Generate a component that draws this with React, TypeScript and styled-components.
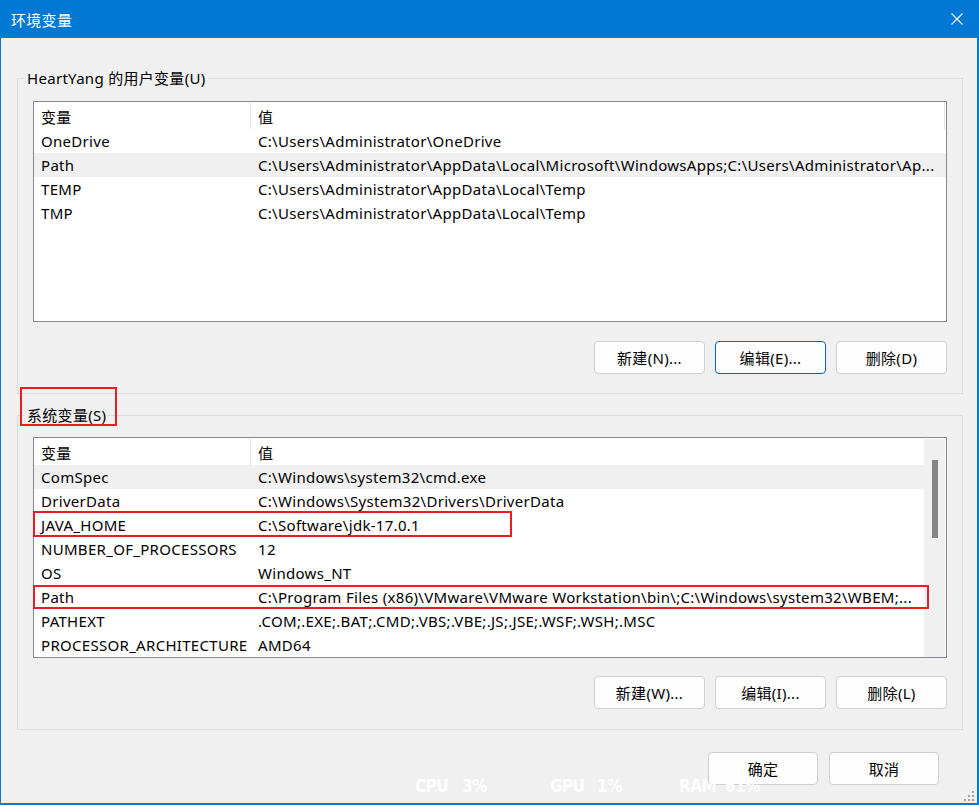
import styled, { createGlobalStyle } from "styled-components";

const GlobalStyle = createGlobalStyle`
  html, body {
    margin: 0;
    padding: 0;
    background: #ffffff;
  }
  * {
    box-sizing: border-box;
  }
`;

const UI_FONT = `"Noto Sans", "Noto Sans CJK SC", sans-serif`;

const Window = styled.div`
  position: relative;
  width: 979px;
  height: 805px;
  display: flex;
  flex-direction: column;
  background: #f0f0f0;
  border-left: 1px solid #0078d4;
  border-right: 2px solid #0078d4;
  border-bottom: 2px solid #0078d4;
  font-family: ${UI_FONT};
  font-size: 15px;
  letter-spacing: 0.3px;
  color: #000;
  overflow: hidden;
`;

const TitleBar = styled.div`
  height: 38px;
  flex-shrink: 0;
  display: flex;
  align-items: center;
  justify-content: space-between;
  padding: 0 14px 0 10px;
  background: #0078d4;
  color: #fff;
  font-size: 15px;
`;

const Body = styled.div`
  flex: 1;
  display: flex;
  flex-direction: column;
  padding: 40px 14px 0 16px;
`;

const Group = styled.div<{ $gap?: number; $bottom: number }>`
  position: relative;
  display: flex;
  flex-direction: column;
  border: 1px solid #dcdcdc;
  padding: 0 15px ${(p) => p.$bottom}px 15px;
  margin-top: ${(p) => p.$gap ?? 0}px;
`;

const Legend = styled.div<{ $after: number }>`
  align-self: flex-start;
  height: 20px;
  line-height: 20px;
  margin: -11px 0 ${(p) => p.$after}px -8px;
  padding: 0 2px;
  background: #f0f0f0;
  white-space: nowrap;
`;

const ListBox = styled.div`
  height: 221px;
  display: flex;
  border: 1px solid #828790;
  background: #fff;
`;

const Table = styled.div`
  flex: 1;
  min-width: 0;
  display: flex;
  flex-direction: column;
`;

const HeaderRow = styled.div<{ $tail?: boolean }>`
  height: 27px;
  display: flex;
  align-items: center;
  padding-top: 1px;
  border-right: ${(p) => (p.$tail ? "1px solid #e5e5e5" : "none")};
  margin-right: ${(p) => (p.$tail ? "1px" : "0")};
`;

const Row = styled.div<{ $selected?: boolean }>`
  position: relative;
  height: 24px;
  display: flex;
  align-items: center;
  background: ${(p) => (p.$selected ? "#f0f0f0" : "transparent")};
`;

const NameCell = styled.div<{ $head?: boolean }>`
  width: 217px;
  height: 100%;
  flex-shrink: 0;
  display: flex;
  align-items: center;
  padding-left: 7px;
  white-space: nowrap;
  overflow: hidden;
  border-right: ${(p) => (p.$head ? "1px solid #e5e5e5" : "none")};
`;

const ValueCell = styled.div`
  flex: 1;
  min-width: 0;
  padding-left: 7px;
  white-space: nowrap;
  overflow: hidden;
`;

const Marker = styled.div<{ $width: number; $top: number; $height: number }>`
  position: absolute;
  left: -1px;
  top: ${(p) => p.$top}px;
  width: ${(p) => p.$width}px;
  height: ${(p) => p.$height}px;
  border: 2px solid #ed1c24;
  pointer-events: none;
`;

const LabelMarker = styled.div`
  position: absolute;
  left: 2px;
  top: -29px;
  width: 97px;
  height: 39px;
  border: 2px solid #ed1c24;
  pointer-events: none;
`;

const ScrollTrack = styled.div`
  width: 21px;
  flex-shrink: 0;
  margin: 1px 1px 0 0;
  background: #f0f0f0;
  display: flex;
  justify-content: center;
  padding-top: 21px;
`;

const ScrollThumb = styled.div`
  width: 6px;
  height: 78px;
  background: #858585;
`;

const ButtonRow = styled.div<{ $top: number }>`
  display: flex;
  justify-content: flex-end;
  gap: 10px;
  margin-top: ${(p) => p.$top}px;
`;

const Button = styled.button<{ $primary?: boolean; $w?: number }>`
  width: ${(p) => p.$w ?? 111}px;
  height: 33px;
  padding: 0;
  border: 1px solid ${(p) => (p.$primary ? "#0067c0" : "#d0d0d0")};
  border-radius: 4px;
  background: #fdfdfd;
  font-family: ${UI_FONT};
  font-size: 15px;
  letter-spacing: 0.3px;
  color: #000;
`;

const Footer = styled.div`
  display: flex;
  justify-content: flex-end;
  gap: 11px;
  margin-top: 22px;
  padding-right: 24px;
`;

const Stats = styled.div`
  position: absolute;
  left: 414px;
  bottom: 8px;
  display: flex;
  font-family: "DejaVu Sans Condensed", "DejaVu Sans", sans-serif;
  font-weight: bold;
  font-size: 17px;
  line-height: 17px;
  color: rgba(255, 255, 255, 0.92);
  letter-spacing: -0.6px;
`;

const StatItem = styled.span<{ $w: number }>`
  flex-shrink: 0;
  width: ${(p) => p.$w}px;
`;

const Grip = styled.svg`
  position: absolute;
  right: 2px;
  bottom: 1px;
`;

type Item = { name: string; value: string; selected?: boolean };

const userVars: Item[] = [
  { name: "OneDrive", value: "C:\\Users\\Administrator\\OneDrive" },
  {
    name: "Path",
    value:
      "C:\\Users\\Administrator\\AppData\\Local\\Microsoft\\WindowsApps;C:\\Users\\Administrator\\Ap...",
    selected: true,
  },
  { name: "TEMP", value: "C:\\Users\\Administrator\\AppData\\Local\\Temp" },
  { name: "TMP", value: "C:\\Users\\Administrator\\AppData\\Local\\Temp" },
];

const sysVars: Item[] = [
  { name: "ComSpec", value: "C:\\Windows\\system32\\cmd.exe", selected: true },
  { name: "DriverData", value: "C:\\Windows\\System32\\Drivers\\DriverData" },
  { name: "JAVA_HOME", value: "C:\\Software\\jdk-17.0.1" },
  { name: "NUMBER_OF_PROCESSORS", value: "12" },
  { name: "OS", value: "Windows_NT" },
  {
    name: "Path",
    value:
      "C:\\Program Files (x86)\\VMware\\VMware Workstation\\bin\\;C:\\Windows\\system32\\WBEM;...",
  },
  { name: "PATHEXT", value: ".COM;.EXE;.BAT;.CMD;.VBS;.VBE;.JS;.JSE;.WSF;.WSH;.MSC" },
  { name: "PROCESSOR_ARCHITECTURE", value: "AMD64" },
];

const CloseIcon = () => (
  <svg width="12" height="12" viewBox="0 0 12 12">
    <path d="M0.5 0.5 L11.5 11.5 M11.5 0.5 L0.5 11.5" stroke="#fff" strokeWidth="1.1" />
  </svg>
);

const App = () => {
  return (
    <>
      <GlobalStyle />
      <Window>
        <TitleBar>
          <span>环境变量</span>
          <CloseIcon />
        </TitleBar>
        <Body>
          <Group $bottom={19}>
            <Legend $after={13}>HeartYang 的用户变量(U)</Legend>
            <ListBox>
              <Table>
                <HeaderRow $tail>
                  <NameCell $head>变量</NameCell>
                  <ValueCell>值</ValueCell>
                </HeaderRow>
                {userVars.map((v) => (
                  <Row key={v.name} $selected={v.selected}>
                    <NameCell>{v.name}</NameCell>
                    <ValueCell>{v.value}</ValueCell>
                  </Row>
                ))}
              </Table>
            </ListBox>
            <ButtonRow $top={19}>
              <Button>新建(N)...</Button>
              <Button $primary>编辑(E)...</Button>
              <Button>删除(D)</Button>
            </ButtonRow>
          </Group>

          <Group $gap={21} $bottom={20}>
            <LabelMarker />
            <Legend $after={12}>系统变量(S)</Legend>
            <ListBox>
              <Table>
                <HeaderRow>
                  <NameCell $head>变量</NameCell>
                  <ValueCell>值</ValueCell>
                </HeaderRow>
                {sysVars.map((v) => (
                  <Row key={v.name} $selected={v.selected}>
                    <NameCell>{v.name}</NameCell>
                    <ValueCell>{v.value}</ValueCell>
                    {v.name === "JAVA_HOME" && <Marker $width={479} $top={-2} $height={26} />}
                    {v.name === "Path" && <Marker $width={896} $top={0} $height={24} />}
                  </Row>
                ))}
              </Table>
              <ScrollTrack>
                <ScrollThumb />
              </ScrollTrack>
            </ListBox>
            <ButtonRow $top={18}>
              <Button>新建(W)...</Button>
              <Button>编辑(I)...</Button>
              <Button>删除(L)</Button>
            </ButtonRow>
          </Group>

          <Footer>
            <Button $w={110}>确定</Button>
            <Button $w={110}>取消</Button>
          </Footer>
        </Body>

        <Stats>
          <StatItem $w={47}>CPU</StatItem>
          <StatItem $w={88}>3%</StatItem>
          <StatItem $w={47}>GPU</StatItem>
          <StatItem $w={82}>1%</StatItem>
          <StatItem $w={46}>RAM</StatItem>
          <StatItem $w={40}>61%</StatItem>
        </Stats>

        <Grip width="12" height="12" viewBox="0 0 12 12">
          {[
            [9, 1],
            [5, 5],
            [9, 5],
            [1, 9],
            [5, 9],
            [9, 9],
          ].map(([x, y]) => (
            <rect key={`${x}-${y}`} x={x} y={y} width="2" height="2" fill="#a0a0a0" />
          ))}
        </Grip>
      </Window>
    </>
  );
};

export default App;
